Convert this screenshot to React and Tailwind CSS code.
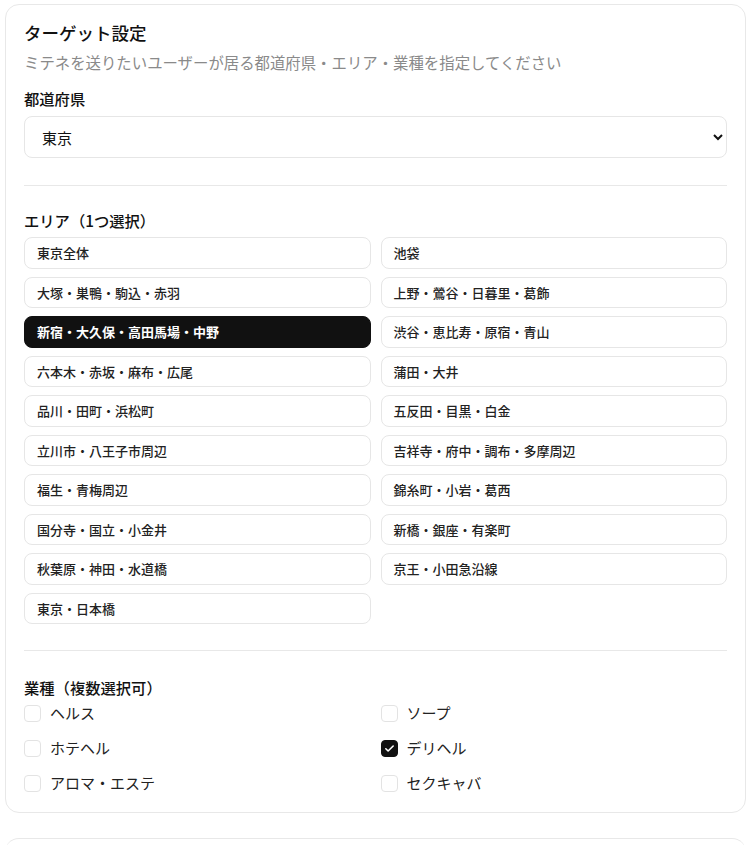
import React, { useState } from 'react';

const areas = [
  '東京全体',
  '池袋',
  '大塚・巣鴨・駒込・赤羽',
  '上野・鶯谷・日暮里・葛飾',
  '新宿・大久保・高田馬場・中野',
  '渋谷・恵比寿・原宿・青山',
  '六本木・赤坂・麻布・広尾',
  '蒲田・大井',
  '品川・田町・浜松町',
  '五反田・目黒・白金',
  '立川市・八王子市周辺',
  '吉祥寺・府中・調布・多摩周辺',
  '福生・青梅周辺',
  '錦糸町・小岩・葛西',
  '国分寺・国立・小金井',
  '新橋・銀座・有楽町',
  '秋葉原・神田・水道橋',
  '京王・小田急沿線',
  '東京・日本橋',
];

const types = ['ヘルス', 'ソープ', 'ホテヘル', 'デリヘル', 'アロマ・エステ', 'セクキャバ'];

const Check = ({ checked }) => (
  <span
    className={
      'flex h-[17px] w-[17px] shrink-0 items-center justify-center rounded-[4px] border ' +
      (checked ? 'border-[#111] bg-[#111]' : 'border-[#e3e3e3] bg-white')
    }
  >
    {checked && (
      <svg width="11" height="11" viewBox="0 0 24 24" fill="none" stroke="white" strokeWidth="3.5" strokeLinecap="round" strokeLinejoin="round">
        <path d="M4 12.5l5 5L20 6.5" />
      </svg>
    )}
  </span>
);

const App = () => {
  const [area, setArea] = useState('新宿・大久保・高田馬場・中野');
  const [selected, setSelected] = useState(['デリヘル']);

  const toggle = (t) => {
    setSelected((prev) => (prev.includes(t) ? prev.filter((x) => x !== t) : [...prev, t]));
  };

  return (
    <div
      className="min-h-screen bg-white px-[5px] pt-[4px] text-[#111]"
      style={{ fontFamily: '"Noto Sans CJK JP", "Noto Sans", sans-serif' }}
    >
      <div className="rounded-[14px] border border-[#e8e8e8] px-[18px] pt-[17px] pb-[17px]">
        <h2 className="text-[17.5px] font-medium leading-[22px]">ターゲット設定</h2>
        <p className="mt-[8px] text-[15.4px] leading-[20px] text-[#8a8a8a]">
          ミテネを送りたいユーザーが居る都道府県・エリア・業種を指定してください
        </p>

        {/* prefecture */}
        <label className="mt-[16px] block text-[15.3px] font-medium leading-[20px]">都道府県</label>
        <select
          defaultValue="東京"
          className="mt-[8px] block h-[42px] w-full rounded-[8px] border border-[#e6e6e6] bg-white pl-[13px] pr-[6px] text-[15px] text-[#111]"
        >
          <option>北海道</option>
          <option>東京</option>
          <option>神奈川</option>
          <option>大阪</option>
        </select>

        <div className="mt-[27px] border-t border-[#e8e8e8]" />

        {/* area */}
        <div className="mt-[24px] text-[15.3px] font-medium leading-[20px]">エリア（1つ選択）</div>
        <div className="mt-[7px] grid grid-cols-2 gap-x-[10px] gap-y-[8px]">
          {areas.map((a) => (
            <button
              key={a}
              type="button"
              onClick={() => setArea(a)}
              className={
                'flex h-[31.5px] items-center rounded-[8px] border px-[12px] text-left text-[13px] ' +
                (area === a
                  ? 'border-[#111] bg-[#111] font-bold text-white'
                  : 'border-[#e6e6e6] bg-white font-medium text-[#222]')
              }
            >
              {a}
            </button>
          ))}
        </div>

        <div className="mt-[26px] border-t border-[#e8e8e8]" />

        {/* business type */}
        <div className="mt-[26px] text-[15.3px] font-medium leading-[20px]">業種（複数選択可）</div>
        <div className="mt-[4px] grid grid-cols-2 gap-x-[10px] gap-y-[11px]">
          {types.map((t) => (
            <label
              key={t}
              onClick={() => toggle(t)}
              className="flex h-[24px] cursor-pointer items-center gap-[9px] text-[15px] text-[#222]"
            >
              <Check checked={selected.includes(t)} />
              <span>{t}</span>
            </label>
          ))}
        </div>
      </div>

      <div className="mt-[25px] h-[40px] rounded-t-[14px] border-t border-[#e8e8e8]" />
    </div>
  );
};

export default App;
